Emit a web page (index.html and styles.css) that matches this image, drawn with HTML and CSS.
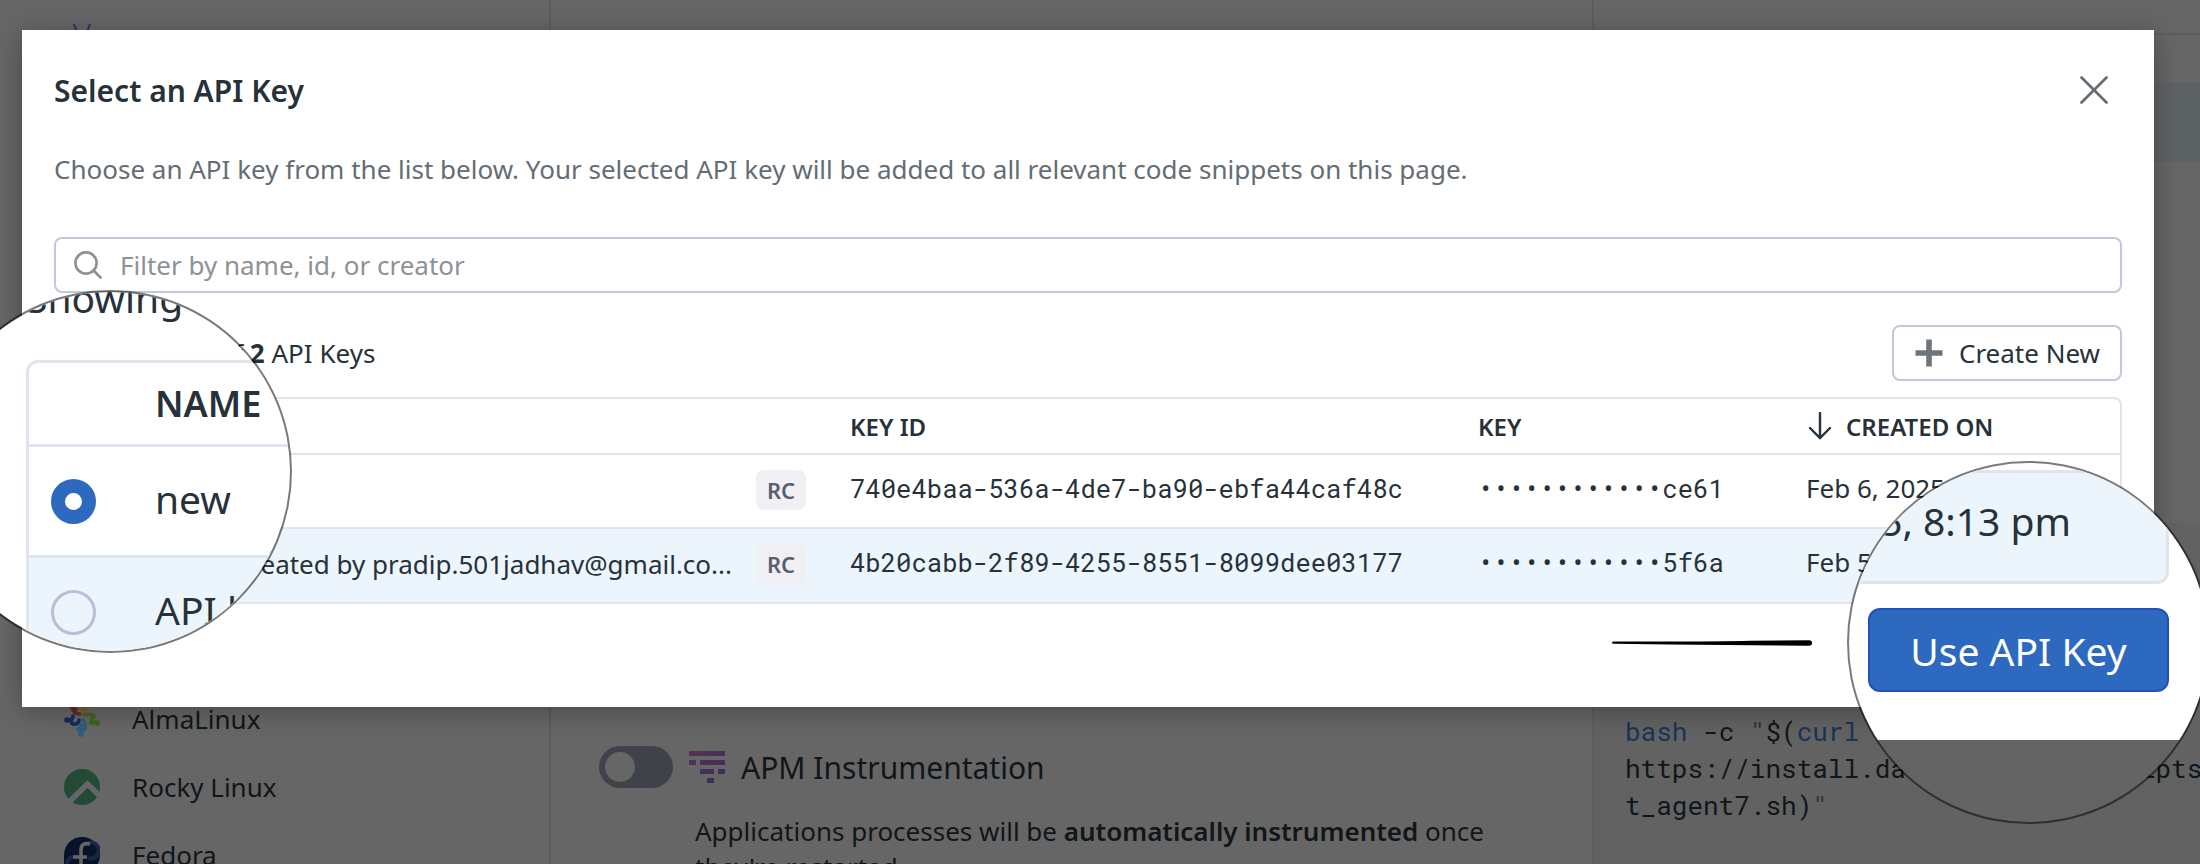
FILE: index.html
```
<!DOCTYPE html>
<html lang="en">
<head>
<meta charset="utf-8">
<title>Select an API Key</title>
<link rel="stylesheet" href="styles.css">
</head>
<body>
<div class="page">
  <aside class="platforms">
    <div class="platform"><svg class="logo" viewBox="0 0 36 36"><path d="M10 4 13 12M26 4 23 12M8 14h20v18H8z" fill="none" stroke="#1e3a70" stroke-width="2"/></svg><span>MacOSX</span></div>
    <div class="spacer"></div>
    <div class="platform"><svg class="logo" viewBox="0 0 36 36">
      <g fill="none" stroke-width="3.600" stroke-linecap="round">
        <path d="M8 3v4q1 2 4 1M9 9q2 4 7 4" stroke="#6f2426"/><path d="M19 13q-1-7 3-9q1 3 6 1V2" stroke="#7a6220"/>
        <path d="M5 19q4 0 4-4M7 20q1 4 5 3q3-1 3-4" stroke="#152a5e"/><path d="M21 14q7-2 9 1q1 2-2 2q-1 0-1 5l4-1" stroke="#3f6420"/>
        <path d="M19 19q4 6 1 9M14 28q3-1 3-4M15 29q3 1 6-1" stroke="#2f5c7c"/></g>
      <circle cx="3" cy="19" r="2.800" fill="#152a5e"/><circle cx="33" cy="22" r="2.800" fill="#3f6420"/><circle cx="17" cy="33" r="2.800" fill="#2f5c7c"/></svg><span>AlmaLinux</span></div>
    <div class="platform"><svg class="logo" viewBox="0 0 36 36"><circle cx="18" cy="18" r="18" fill="#224b35"/><path d="M4 34 23.500 15 38 29" fill="none" stroke="#666" stroke-width="5.500"/></svg><span>Rocky Linux</span></div>
    <div class="platform"><svg class="logo" viewBox="0 0 36 36"><path d="M0 18a18 18 0 1 1 18 18H0z" fill="#081329"/><g fill="none" stroke="#152848" stroke-width="4"><path d="M24 6a8 8 0 1 1 0 15"/><path d="M14 20a8 8 0 1 0 5 8"/></g><path d="M26 7q-9-2-9 6v13q0 6-7 6M9 20h14" fill="none" stroke="#666" stroke-width="3.600"/></svg><span>Fedora</span></div>
  </aside>
  <main class="setup">
    <div class="feature">
      <span class="toggle"><i></i></span>
      <svg class="apm" width="36" height="32" viewBox="0 0 36 32"><defs><linearGradient id="ag" gradientUnits="userSpaceOnUse" x1="0" y1="0" x2="24" y2="32"><stop offset="0" stop-color="#5b3055"/><stop offset="1" stop-color="#38305c"/></linearGradient></defs><path fill="url(#ag)" d="M0 0h36v5H0zM0 9h7v5H0zM11 9h25v5H11zM11 18h14v5H11zM29 18h7v5h-7zM18 27h7v5h-7z"/></svg>
      <h3>APM Instrumentation</h3>
    </div>
    <p class="feature-text">Applications processes will be <b>automatically instrumented</b> once<br>they're restarted.</p>
  </main>
  <section class="install">
    <div class="install-top"></div>
    <div class="install-step"></div>
    <div class="install-gap"></div>
    <pre class="code"><span class="cmd">bash</span> -c <span class="str">"</span>$(<span class="cmd">curl</span> -L
https://install.datadoghq.com/scripts
t_agent7.sh)<span class="str">"</span></pre>
  </section>
</div>

<div class="modal">
  <header class="modal-head">
    <h2>Select an API Key</h2>
    <svg class="close" width="28" height="28" viewBox="0 0 28 28"><path d="M1.500 1.500 26.500 26.500M26.500 1.500 1.500 26.500" fill="none" stroke="#646d73" stroke-width="2.700" stroke-linecap="round"/></svg>
  </header>
  <p class="lead">Choose an API key from the list below. Your selected API key will be added to all relevant code snippets on this page.</p>
  <div class="search">
    <svg width="28" height="28" viewBox="0 0 28 28"><circle cx="12" cy="12" r="10.600" fill="none" stroke="#8c9297" stroke-width="2.600"/><path d="M19.500 19.500 26.500 26.500" stroke="#8c9297" stroke-width="2.800" stroke-linecap="round"/></svg>
    <span>Filter by name, id, or creator</span>
  </div>
  <div class="toolbar">
    <span class="count">Showing <b>1</b>-<b>2</b> of <b>2</b> API Keys</span>
    <span class="create"><svg width="28" height="28" viewBox="0 0 28 28"><path d="M14 .5v27M.5 14h27" stroke="#6c757b" stroke-width="5.600"/></svg>Create New</span>
  </div>
  <div class="table">
    <div class="row head"><span></span><span></span><span>KEY ID</span><span>KEY</span><span class="sort"><svg width="24" height="28" viewBox="0 0 24 28"><path d="M12 1v25M2 16l10 10 10-10" fill="none" stroke="#26313a" stroke-width="2.400" stroke-linecap="round"/></svg>CREATED ON</span></div>
    <div class="row"><span class="name"></span><span class="owner"><i class="avatar">RC</i></span><span class="mono">740e4baa-536a-4de7-ba90-ebfa44caf48c</span><span class="mono key">••••••••••••ce61</span><span class="date">Feb 6, 2025, 5:17 am</span></div>
    <div class="row alt"><span class="name">API key created by pradip.501jadhav@gmail.co...</span><span class="owner"><i class="avatar">RC</i></span><span class="mono">4b20cabb-2f89-4255-8551-8099dee03177</span><span class="mono key">••••••••••••5f6a</span><span class="date">Feb 5, 2025, 8:13 pm</span></div>
  </div>
  <svg class="stroke-mark" width="202" height="8" viewBox="0 0 202 8"><path d="M2 1.500Q100 1.800 140 .8L198 .3q3 0 3 2.700t-3 2.800L60 4.500 2 3.800q-2-1.200 0-2.300z"/></svg>
</div>

<div class="lens lens-left">
  <div class="lens-showing">Showing</div>
  <div class="lens-table">
    <div class="lens-row lens-head"><span></span><b>NAME</b></div>
    <div class="lens-row"><i class="radio on"></i><span>new</span></div>
    <div class="lens-row lens-alt"><i class="radio"></i><span>API key</span></div>
  </div>
</div>
<div class="lens lens-right">
  <div class="lens-panel">
    <div class="lens-date">5, 8:13 pm</div>
    <div class="use">Use API Key</div>
  </div>
</div>
</body>
</html>
```
FILE: styles.css
```
* { box-sizing: border-box; }
body { margin: 0; width: 2200px; height: 864px; overflow: hidden; position: relative; background: #666; color: #26313a; font-family: "Noto Sans", sans-serif; font-size: 26px; }
h2, h3, p, pre { margin: 0; }
i { font-style: normal; }

/* dimmed page */
.page { display: flex; height: 864px; color: #10161a; }
.platforms { flex: none; width: 551px; border-right: 2px solid #5c5c66; padding: 4px 0 0 64px; }
.platform { display: flex; align-items: center; gap: 32px; height: 68px; white-space: nowrap; }
.logo { width: 36px; height: 36px; }
.spacer { height: 613px; }
.setup { flex: none; width: 1043px; border-right: 2px solid #5c5c66; padding: 746px 0 0 48px; }
.feature { display: flex; align-items: center; height: 42px; }
.toggle { width: 74px; height: 42px; border-radius: 21px; background: #3f4249; padding: 6px; }
.toggle i { display: block; width: 30px; height: 30px; border-radius: 50%; background: #666; }
.apm { margin: 0 16px; }
.feature h3 { font-weight: 400; font-size: 30px; }
.feature-text { padding: 25px 0 0 96px; line-height: 36px; white-space: nowrap; font-size: 26px; }
.feature-text b { font-weight: 600; }
.install { flex: 1; min-width: 0; display: flex; flex-direction: column; }
.install-top { height: 83px; flex: none; background: linear-gradient(#5c5c66, #5c5c66) 0 33px / 100% 2px no-repeat; }
.install-step { height: 79px; flex: none; background: #5d6265; }
.install-gap { height: 361px; flex: none; }
.code { flex: 1; background: #626262; padding: 190px 0 0 31px; font: 26px/37px "Roboto Mono", "Noto Sans Mono", "Liberation Mono", monospace; overflow: hidden; }
.cmd { color: #193459; }
.str { color: #1f3f22; }

/* dialog */
.modal { position: absolute; left: 22px; top: 30px; width: 2132px; height: 677px; background: #fff; box-shadow: 0 4px 24px rgba(0,0,0,.3); padding: 39px 32px 0; }
.modal-head { display: flex; justify-content: space-between; align-items: center; height: 42px; padding-right: 14px; }
.modal-head h2 { font-size: 30px; font-weight: 600; }
.lead { margin-top: 40px; height: 36px; line-height: 36px; color: #646d73; }
.search { margin-top: 50px; height: 56px; border: 2px solid #c3c7dc; border-radius: 8px; display: flex; align-items: center; gap: 18px; padding-left: 18px; color: #8c9297; }
.toolbar { display: flex; justify-content: space-between; align-items: center; margin-top: 32px; height: 56px; padding-left: 8px; }
.create { display: flex; align-items: center; justify-content: center; gap: 16px; width: 230px; height: 56px; border: 2px solid #c3c7dc; border-radius: 8px; }
.create svg { margin-left: 1px; }
.table { margin-top: 16px; height: 207px; border: 2px solid #e1e4ec; border-radius: 8px; }
.row { display: grid; grid-template-columns: 700px 94px 628px 328px 1fr; align-items: center; height: 74px; border-top: 2px solid #e1e4ec; white-space: nowrap; }
.row.head { height: 54px; border: 0; font-size: 24px; font-weight: 600; }
.row.alt { background: #ecf5fc; height: 75px; }
.name { text-align: right; padding: 0 24px 4px 0; }
.owner { padding-bottom: 3px; }
.avatar { display: flex; align-items: center; justify-content: center; width: 50px; height: 40px; border-radius: 8px; background: #f0f0f4; color: #585f70; font-size: 22px; font-weight: 600; }
.mono { padding-bottom: 7px; font: 25.600px "Roboto Mono", "Noto Sans Mono", "Liberation Mono", monospace; }
.date { padding-bottom: 7px; }
.sort { display: flex; align-items: center; gap: 14px; padding-left: 2px; }
.stroke-mark { display: block; margin: 36px 0 0 1557px; }

/* magnifiers */
.lens { position: absolute; border-radius: 50%; overflow: hidden; border: 2px solid rgba(0,0,0,.52); background-clip: padding-box; color: #26313a; font-size: 39px; white-space: nowrap; }
.lens-left { left: -71px; top: 290px; width: 363px; height: 363px; background-color: #fff; }
.lens-showing { margin: -24px 0 0 95px; height: 92px; line-height: 60px; }
.lens-table { margin-left: 95px; width: 400px; border: 3px solid #e1e4ee; border-radius: 12px; }
.lens-row { display: grid; grid-template-columns: 104px 1fr; align-items: center; height: 111px; padding-left: 22px; border-top: 3px solid #e1e4ee; }
.lens-row span { padding-bottom: 5px; }
.lens-head { height: 81px; border: 0; font-size: 36px; }
.lens-head b { font-weight: 600; }
.lens-alt { background: #ecf5fc; }
.radio { width: 45px; height: 45px; border: 3px solid #b9bed6; border-radius: 50%; }
.radio.on { border: 14px solid #2d69bf; }
.lens-right { left: 1847px; top: 461px; width: 363px; height: 363px; background-color: #646464; }
.lens-panel { background: #fff; height: 277px; padding: 7px 39px 0 0; }
.lens-date { margin-left: -120px; height: 114px; line-height: 96px; background: #ecf5fc; border: 3px solid #e1e4ee; border-radius: 0 0 12px; text-align: right; padding-right: 95px; }
.lens-right .lens-date { margin-left: 0; border-left: 0; padding-right: 95px; }
.use { margin: 24px 0 0 19px; height: 84px; width: 301px; border: 2px solid #2450bd; border-radius: 12px; background: #2d69bf; color: #fff; display: flex; align-items: center; justify-content: center; }
```
